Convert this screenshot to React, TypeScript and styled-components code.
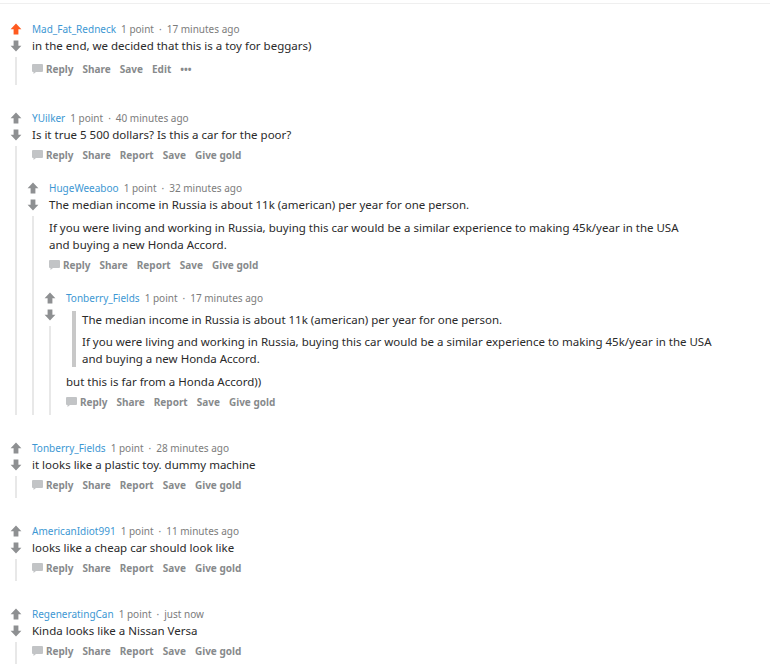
import React from "react";
import styled, { createGlobalStyle } from "styled-components";

const GlobalStyle = createGlobalStyle`
  html, body {
    margin: 0;
    padding: 0;
    background: #ffffff;
  }
  body {
    font-family: "Noto Sans", "Open Sans", Arial, sans-serif;
    color: #222222;
  }
`;

type CommentData = {
  author: string;
  time: string;
  body: React.ReactNode;
  upvoted?: boolean;
  own?: boolean;
  children?: CommentData[];
};

const Page = styled.div`
  margin-top: 3px;
  border-top: 1px solid #efefef;
  padding: 16px 0 0 7px;
`;

// $gap: space above this comment (0 for the first of its list)
const Item = styled.div<{ $gap: number }>`
  display: grid;
  grid-template-columns: 17px 1fr;
  margin-top: ${(p) => p.$gap}px;
`;

const Rail = styled.div`
  display: flex;
  flex-direction: column;
  align-items: center;
`;

const VoteBox = styled.button`
  width: 17px;
  height: 17px;
  padding: 0;
  border: none;
  background: none;
  display: flex;
  align-items: center;
  justify-content: center;
  cursor: pointer;
`;

const ThreadLine = styled.div`
  flex: 1;
  width: 2px;
  margin-top: 3px;
  background: #e8e8e8;
`;

const Main = styled.div`
  min-width: 0;
`;

const Own = styled.div<{ $own?: boolean }>`
  padding-left: 8px;
  padding-bottom: ${(p) => (p.$own ? "7.5px" : "4.5px")};
`;

const Meta = styled.div`
  display: flex;
  align-items: center;
  height: 17px;
  font-size: 10px;
  color: #7c7c7c;
  white-space: nowrap;
`;

const Author = styled.a`
  color: #3d97d3;
  text-decoration: none;
  margin-right: 5px;
`;

const Dot = styled.span`
  margin: 0 5px;
`;

const Body = styled.div`
  font-size: 11.5px;
  line-height: 17px;
  color: #2a2a2a;
  p {
    margin: 0;
  }
  p + p,
  blockquote + p,
  p + blockquote {
    margin-top: 6px;
  }
`;

const Quote = styled.blockquote`
  margin: 5px 0 0 6px;
  padding-left: 6px;
  border-left: 4px solid #c8c8c8;
  p + p {
    margin-top: 5px;
  }
`;

const Actions = styled.div<{ $own?: boolean }>`
  display: flex;
  align-items: center;
  gap: 9px;
  height: 17px;
  margin-top: ${(p) => (p.$own ? "6px" : "3px")};
`;

const Action = styled.button`
  display: flex;
  align-items: center;
  gap: 3px;
  padding: 0;
  border: none;
  background: none;
  font-family: inherit;
  font-size: 10px;
  font-weight: 700;
  color: #878a8c;
  cursor: pointer;
`;

function Arrow({ down, color }: { down?: boolean; color: string }) {
  return (
    <svg
      width="12"
      height="12"
      viewBox="0 0 20 20"
      style={down ? { transform: "rotate(180deg)" } : undefined}
    >
      <path d="M10 1 L1 10.5 H6 V19 H14 V10.5 H19 Z" fill={color} />
    </svg>
  );
}

function Bubble() {
  return (
    <svg width="11" height="10" viewBox="0 0 11 10">
      <path d="M1 0 H10 A1 1 0 0 1 11 1 V7 A1 1 0 0 1 10 8 H4 L1.5 10 V8 H1 A1 1 0 0 1 0 7 V1 A1 1 0 0 1 1 0 Z" fill="#c2c4c6" />
    </svg>
  );
}

function Comment({ data, gap }: { data: CommentData; gap: number }) {
  const labels = data.own
    ? ["Share", "Save", "Edit", "•••"]
    : ["Share", "Report", "Save", "Give gold"];
  return (
    <Item $gap={gap}>
      <Rail>
        <VoteBox aria-label="upvote">
          <Arrow color={data.upvoted ? "#ff5a1f" : "#8e9092"} />
        </VoteBox>
        <VoteBox aria-label="downvote">
          <Arrow down color="#8e9092" />
        </VoteBox>
        <ThreadLine />
      </Rail>
      <Main>
        <Own $own={data.own}>
          <Meta>
            <Author href="#">{data.author}</Author>
            <span>1 point</span>
            <Dot>·</Dot>
            <span>{data.time}</span>
          </Meta>
          <Body>{data.body}</Body>
          <Actions $own={data.own}>
            <Action>
              <Bubble />
              Reply
            </Action>
            {labels.map((l) => (
              <Action key={l}>{l}</Action>
            ))}
          </Actions>
        </Own>
        {data.children &&
          data.children.map((c, i) => <Comment key={i} data={c} gap={11.5} />)}
      </Main>
    </Item>
  );
}

const median = "The median income in Russia is about 11k (american) per year for one person.";
const living = (
  <>
    If you were living and working in Russia, buying this car would be a similar experience to making 45k/year in the USA
    <br />
    and buying a new Honda Accord.
  </>
);

const comments: CommentData[] = [
  {
    author: "Mad_Fat_Redneck",
    time: "17 minutes ago",
    upvoted: true,
    own: true,
    body: <p>in the end, we decided that this is a toy for beggars)</p>,
  },
  {
    author: "YUilker",
    time: "40 minutes ago",
    body: <p>Is it true 5 500 dollars? Is this a car for the poor?</p>,
    children: [
      {
        author: "HugeWeeaboo",
        time: "32 minutes ago",
        body: (
          <>
            <p>{median}</p>
            <p>{living}</p>
          </>
        ),
        children: [
          {
            author: "Tonberry_Fields",
            time: "17 minutes ago",
            body: (
              <>
                <Quote>
                  <p>{median}</p>
                  <p>{living}</p>
                </Quote>
                <p>but this is far from a Honda Accord))</p>
              </>
            ),
          },
        ],
      },
    ],
  },
  {
    author: "Tonberry_Fields",
    time: "28 minutes ago",
    body: <p>it looks like a plastic toy. dummy machine</p>,
  },
  {
    author: "AmericanIdiot991",
    time: "11 minutes ago",
    body: <p>looks like a cheap car should look like</p>,
  },
  {
    author: "RegeneratingCan",
    time: "just now",
    body: <p>Kinda looks like a Nissan Versa</p>,
  },
];

export default function App() {
  return (
    <>
      <GlobalStyle />
      <Page>
        {comments.map((c, i) => (
          <Comment key={i} data={c} gap={i === 0 ? 0 : 24.5} />
        ))}
      </Page>
    </>
  );
}
